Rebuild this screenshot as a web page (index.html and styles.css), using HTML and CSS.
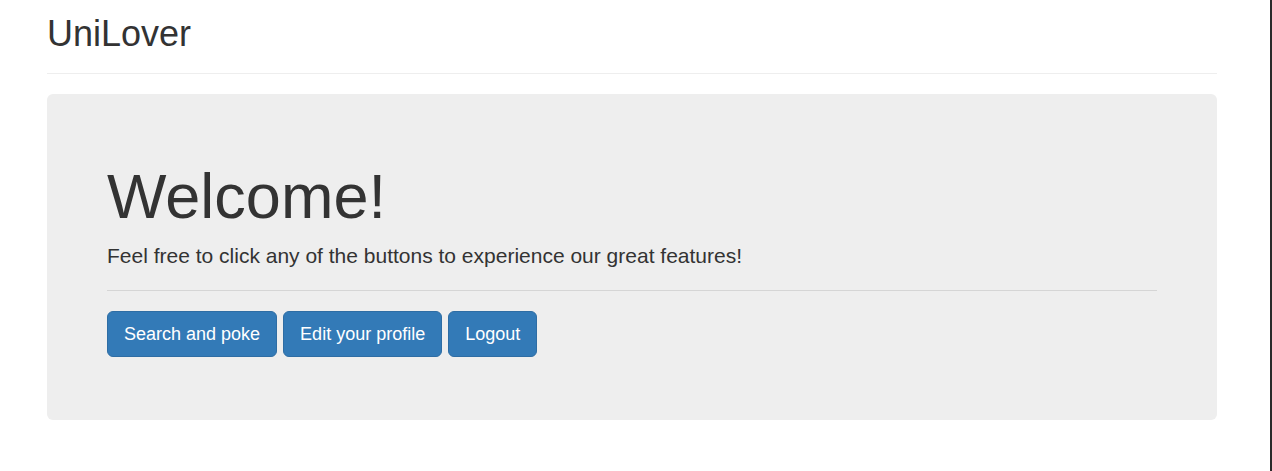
FILE: index.html
```html
<!DOCTYPE html>
<html lang="en">
<head>
<meta charset="utf-8">
<title>UniLover</title>
<link rel="stylesheet" href="styles.css">
</head>
<body>
<div class="page">
  <div class="container">
    <header class="page-header">
      <h1>UniLover</h1>
    </header>
    <section class="jumbotron">
      <h1>Welcome!</h1>
      <p class="lead">Feel free to click any of the buttons to experience our great features!</p>
      <hr>
      <div class="actions">
        <a class="btn" href="#">Search and poke</a>
        <a class="btn" href="#">Edit your profile</a>
        <a class="btn" href="#">Logout</a>
      </div>
    </section>
  </div>
</div>
</body>
</html>
```
FILE: styles.css
```css
html, body {
  margin: 0;
  padding: 0;
  background: #fff;
}
body {
  font-family: "Liberation Sans", Arial, Helvetica, sans-serif;
  color: #333;
  font-size: 14px;
  line-height: 1.42857;
}
.page {
  box-sizing: border-box;
  min-height: 100vh;
  border-right: 2px solid #2a2a2a;
  padding-left: 47px;
}
.container {
  width: 1170px;
}
.page-header {
  padding: 14px 0 9px;
  border-bottom: 1px solid #eee;
  margin-bottom: 20px;
}
.page-header h1 {
  margin: 0 0 10px;
  font-size: 36px;
  font-weight: 500;
  line-height: 1.1;
  color: #333;
}
.jumbotron {
  background: #eee;
  border-radius: 6px;
  padding: 48px 60px;
}
.jumbotron h1 {
  margin: 20px 0 10px;
  font-size: 63px;
  font-weight: 500;
  line-height: 1.1;
}
.jumbotron .lead {
  margin: 0;
  font-size: 21px;
  font-weight: 200;
  line-height: 30px;
}
.jumbotron hr {
  margin: 19px 0 20px;
  border: 0;
  border-top: 1px solid #d5d5d5;
  height: 0;
}
.actions {
  display: flex;
  gap: 6px;
  margin-bottom: 15px;
}
.btn {
  display: inline-block;
  padding: 10px 16px;
  font-size: 18px;
  line-height: 24px;
  color: #fff;
  background: #337ab7;
  border: 1px solid #2e6da4;
  border-radius: 6px;
  text-decoration: none;
}
```
